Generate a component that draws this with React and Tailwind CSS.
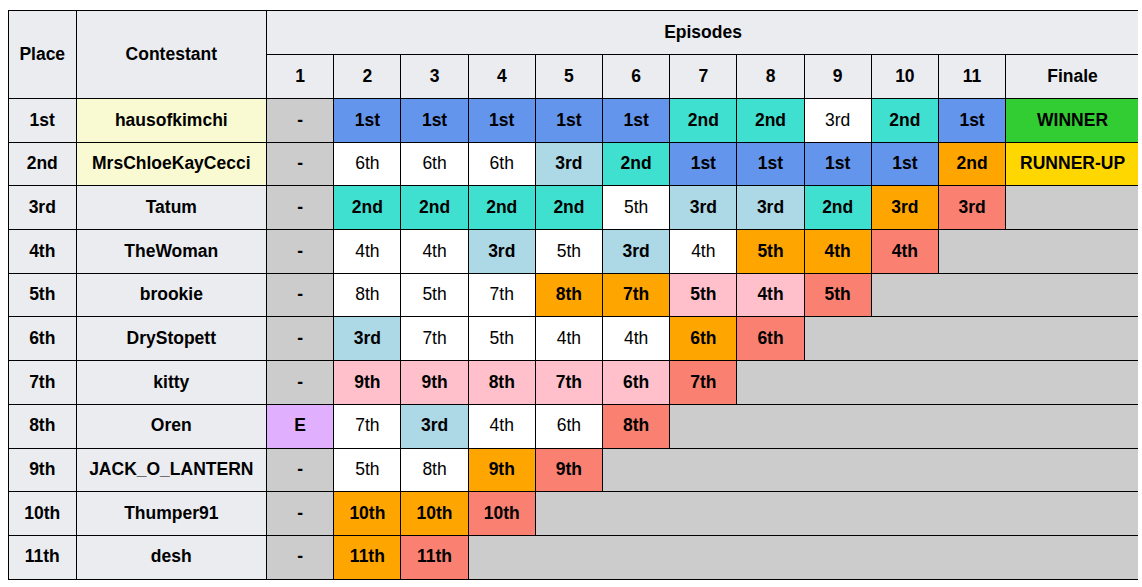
const COLORS = {
  B: 'bg-[#6495ed] font-bold',
  T: 'bg-[#40e0d0] font-bold',
  L: 'bg-[#add8e6] font-bold',
  O: 'bg-[#ffa500] font-bold',
  S: 'bg-[#fa8072] font-bold',
  P: 'bg-[#ffc0cb] font-bold',
  W: 'bg-white font-normal',
  D: 'bg-[#cccccc] font-bold',
  E: 'bg-[#e0b0ff] font-bold',
};

const rows = [
  { place: '1st', name: 'hausofkimchi', top: true, eps: ['-D', '1stB', '1stB', '1stB', '1stB', '1stB', '2ndT', '2ndT', '3rdW', '2ndT', '1stB'], finale: 'WINNER' },
  { place: '2nd', name: 'MrsChloeKayCecci', top: true, eps: ['-D', '6thW', '6thW', '6thW', '3rdL', '2ndT', '1stB', '1stB', '1stB', '1stB', '2ndO'], finale: 'RUNNER-UP' },
  { place: '3rd', name: 'Tatum', eps: ['-D', '2ndT', '2ndT', '2ndT', '2ndT', '5thW', '3rdL', '3rdL', '2ndT', '3rdO', '3rdS'] },
  { place: '4th', name: 'TheWoman', eps: ['-D', '4thW', '4thW', '3rdL', '5thW', '3rdL', '4thW', '5thO', '4thO', '4thS'] },
  { place: '5th', name: 'brookie', eps: ['-D', '8thW', '5thW', '7thW', '8thO', '7thO', '5thP', '4thP', '5thS'] },
  { place: '6th', name: 'DryStopett', eps: ['-D', '3rdL', '7thW', '5thW', '4thW', '4thW', '6thO', '6thS'] },
  { place: '7th', name: 'kitty', eps: ['-D', '9thP', '9thP', '8thP', '7thP', '6thP', '7thS'] },
  { place: '8th', name: 'Oren', eps: ['EE', '7thW', '3rdL', '4thW', '6thW', '8thS'] },
  { place: '9th', name: 'JACK_O_LANTERN', eps: ['-D', '5thW', '8thW', '9thO', '9thS'] },
  { place: '10th', name: 'Thumper91', eps: ['-D', '10thO', '10thO', '10thS'] },
  { place: '11th', name: 'desh', eps: ['-D', '11thO', '11thS'] },
];

const cell = 'border border-black text-center align-middle p-0';

export default function App() {
  return (
    <div className="bg-white min-h-screen pt-[10px] pl-2 text-black font-['Liberation_Sans',Arial,sans-serif] text-[17.5px] leading-none">
      <div className="w-[1130px] overflow-hidden">
        <table className="table-fixed border-collapse w-[1132px]">
          <colgroup>
            <col className="w-[67.5px]" />
            <col className="w-[190.6px]" />
            {Array.from({ length: 11 }, (_, i) => (
              <col key={i} className="w-[67.2px]" />
            ))}
            <col />
          </colgroup>
          <thead>
            <tr className="h-[44px] bg-[#eaecf0] font-bold">
              <th rowSpan={2} className={cell}>Place</th>
              <th rowSpan={2} className={cell}>Contestant</th>
              <th colSpan={12} className={cell}>Episodes</th>
            </tr>
            <tr className="h-[44px] bg-[#eaecf0] font-bold">
              {Array.from({ length: 11 }, (_, i) => (
                <th key={i} className={cell}>{i + 1}</th>
              ))}
              <th className={cell}>Finale</th>
            </tr>
          </thead>
          <tbody>
            {rows.map((r) => {
              const rest = 12 - r.eps.length;
              return (
                <tr key={r.place} className="h-[43.7px]">
                  <td className={`${cell} bg-[#eaecf0] font-bold`}>{r.place}</td>
                  <td className={`${cell} font-bold ${r.top ? 'bg-[#fafad2]' : 'bg-[#eaecf0]'}`}>{r.name}</td>
                  {r.eps.map((e, i) => {
                    const code = e.slice(-1);
                    const text = e.slice(0, -1);
                    return (
                      <td key={i} className={`${cell} ${COLORS[code]}`}>{text}</td>
                    );
                  })}
                  {r.finale === 'WINNER' && (
                    <td className={`${cell} bg-[#32cd32] font-bold`}>WINNER</td>
                  )}
                  {r.finale === 'RUNNER-UP' && (
                    <td className={`${cell} bg-[#ffd700] font-bold`}>RUNNER-UP</td>
                  )}
                  {!r.finale && rest > 0 && (
                    <td colSpan={rest} className={`${cell} bg-[#cccccc]`}></td>
                  )}
                </tr>
              );
            })}
          </tbody>
        </table>
      </div>
    </div>
  );
}
